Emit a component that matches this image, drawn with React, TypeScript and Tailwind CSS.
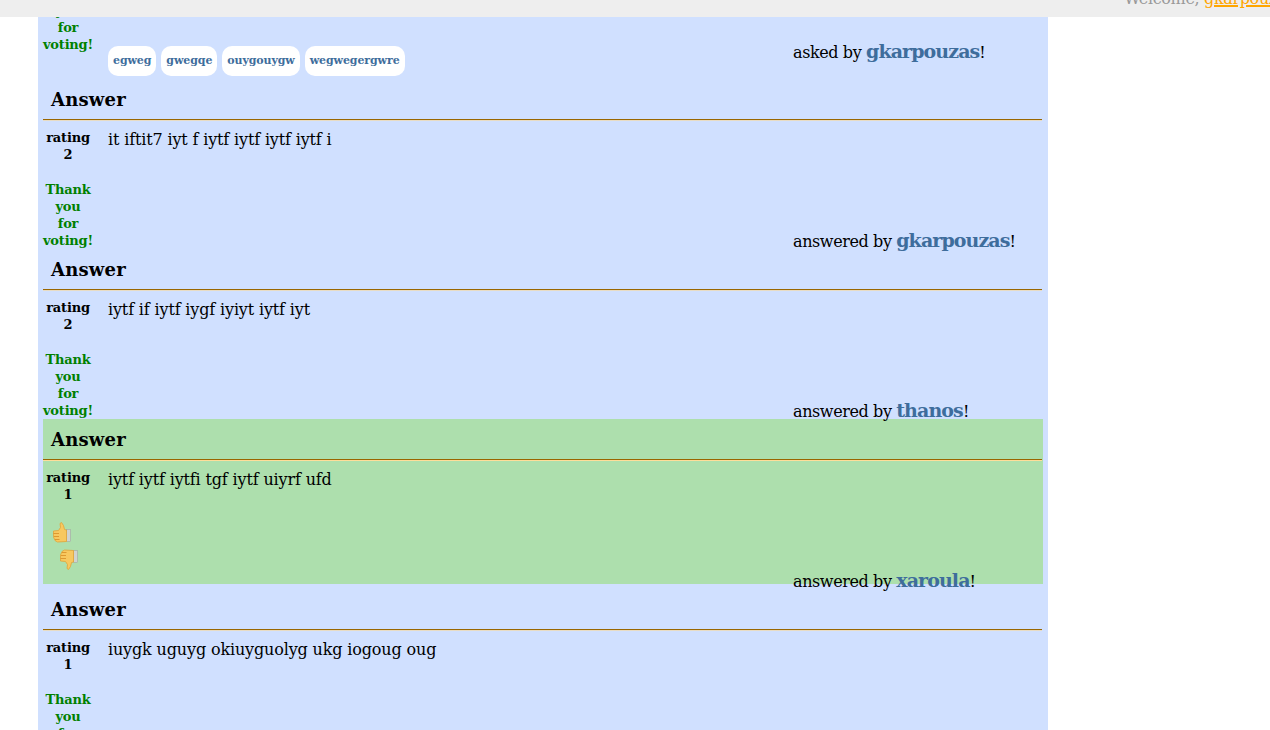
import React from 'react';

const answers = [
  { rating: 2, text: 'it iftit7 iyt f iytf iytf iytf iytf i', author: 'gkarpouzas', voted: true, best: false },
  { rating: 2, text: 'iytf if iytf iygf iyiyt iytf iyt', author: 'thanos', voted: true, best: false },
  { rating: 1, text: 'iytf iytf iytfi tgf iytf uiyrf ufd', author: 'xaroula', voted: false, best: true },
  { rating: 1, text: 'iuygk uguyg okiuyguolyg ukg iogoug oug', author: 'gkarpouzas', voted: true, best: false },
];

const tags = ['egweg', 'gwegqe', 'ouygouygw', 'wegwegergwre'];

const Thumb: React.FC<{ down?: boolean }> = ({ down }) => (
  <svg width="22" height="21" viewBox="0 0 20 21" className={down ? 'rotate-180 -scale-x-100' : ''}>
    <rect x="14.5" y="7.5" width="4" height="12" fill="#d0d3d0" stroke="#9aa09a" strokeWidth="0.5" />
    <path
      d="M1.5 9 L6.5 8.5 L8.5 5.5 L8 1.5 L9.5 0.5 L11.5 3.5 L12.5 7.5 L14.5 8 L14.5 19.5 L5.5 20 L3 18.5 L1.5 15 Z"
      fill="#f8c85f"
      stroke="#e2a336"
      strokeWidth="0.8"
    />
    <path d="M1.5 11.5 H7 M2 14.5 H7 M3 17.5 H7.5" stroke="#d9932a" strokeWidth="0.9" />
  </svg>
);

const Thanks: React.FC = () => (
  <div className="text-[#008000]">
    <div>Thank</div>
    <div>you</div>
    <div>for</div>
    <div>voting!</div>
  </div>
);

const VoteColumn: React.FC<{ rating: number; voted: boolean }> = ({ rating, voted }) => (
  <div className="w-[50px] ml-[5px] shrink-0 pt-[9px] text-center text-[13px] leading-[17px] font-bold tracking-[-0.2px]">
    <div>rating</div>
    <div>{rating}</div>
    {voted ? (
      <div className="mt-[18px]"><Thanks /></div>
    ) : (
      <div className="mt-[19px]">
        <div className="ml-[8px]"><Thumb /></div>
        <div className="ml-[15px] mt-[6px]"><Thumb down /></div>
      </div>
    )}
  </div>
);

export default function App() {
  return (
    <div className="relative h-[730px] overflow-hidden bg-white text-black font-['DejaVu_Serif',serif]">
      <div className="absolute top-0 left-0 z-10 h-[17px] w-full overflow-hidden bg-[#eeeeee] pl-[1124px] whitespace-nowrap text-[16px] leading-[20px] tracking-[-0.35px] text-[#999999]">
        <div className="-mt-[11px]">
          Welcome, <span className="text-[#ffa500] underline decoration-2">gkarpouzas</span>
        </div>
      </div>

      <div className="ml-[38px] w-[1010px] bg-[#d0e0ff]">
        {/* question footer */}
        <div className="flex h-[79px]">
          <div className="w-[50px] ml-[5px] shrink-0 -mt-[32px] text-center text-[13px] leading-[17px] font-bold tracking-[-0.2px]">
            <div className="h-[17px]" />
            <Thanks />
          </div>
          <div className="ml-[15px] flex w-[685px] shrink-0 items-start gap-[5px] pt-[46px]">
            {tags.map(t => (
              <span key={t} className="flex h-[30px] items-center rounded-[10px] bg-white px-[5px] text-[11px] font-bold tracking-[-0.1px] text-[#3e6d9c]">
                {t}
              </span>
            ))}
          </div>
          <div className="pt-[38px] text-[16px] leading-[26px] tracking-[-0.4px]">
            asked by <span className="text-[19px] font-bold tracking-[-0.9px] text-[#3e6d9c]">gkarpouzas</span>!
          </div>
        </div>

        {answers.map((a, i) => (
          <div key={i} className="h-[170px]">
            <div className={`ml-[5px] h-[165px] w-[1000px] ${a.best ? 'bg-[#addfad]' : ''}`}>
              <div className="h-[40px] pl-[8px] pt-[9px] text-[18px] leading-[24px] font-bold tracking-[0.2px]">
                Answer
              </div>
              <div className="h-[1px] w-[999px] bg-[#996600]" />
              <div className={`h-[1px] w-[999px] ${a.best ? 'bg-[#ffdd99]' : 'bg-[#e8dcc4]'}`} />
              <div className="flex h-[123px]">
                <div className="-ml-[5px] -mt-[1px] flex">
                  <VoteColumn rating={a.rating} voted={a.voted} />
                </div>
                <div className="ml-[15px] w-[685px] shrink-0 pt-[8px] text-[16px] leading-[22px] tracking-[-0.15px]">{a.text}</div>
                <div className="flex items-end text-[16px] leading-[26px] tracking-[-0.4px]">
                  <div className="-mb-[11px]">
                    answered by <span className="text-[19px] font-bold tracking-[-0.9px] text-[#3e6d9c]">{a.author}</span>!
                  </div>
                </div>
              </div>
            </div>
          </div>
        ))}
      </div>
    </div>
  );
}
